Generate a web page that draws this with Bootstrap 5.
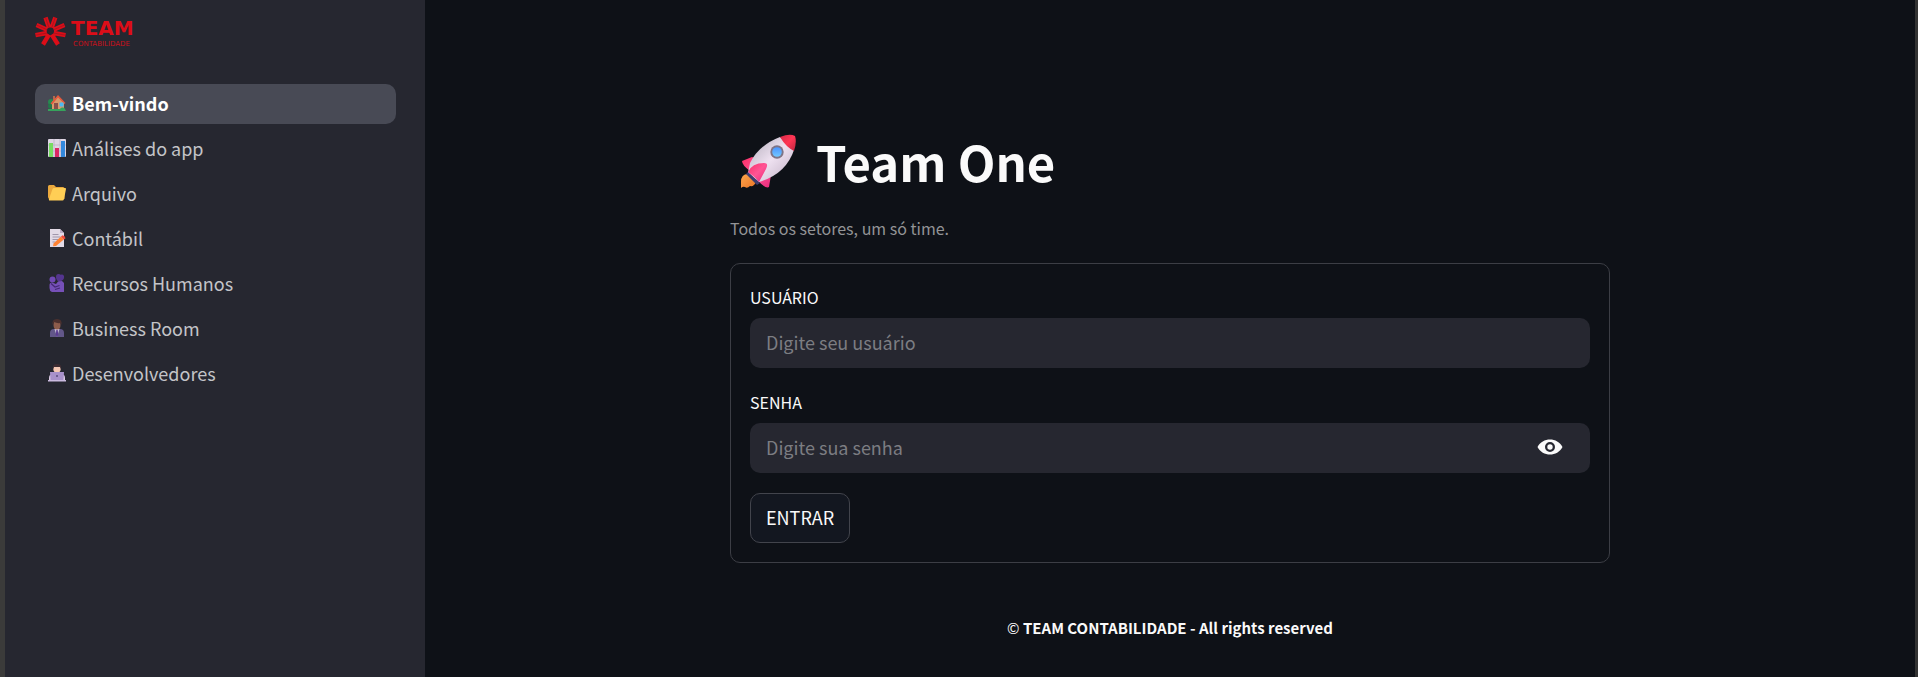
<!DOCTYPE html>
<html lang="pt-BR">
<head>
<meta charset="utf-8">
<meta name="viewport" content="width=device-width, initial-scale=1">
<title>Team One</title>
<link href="https://cdn.jsdelivr.net/npm/bootstrap@5.3.0/dist/css/bootstrap.min.css" rel="stylesheet">
<style>
  body { background: #0e1117; color: #fafafa; font-family: "Noto Sans CJK JP", "Noto Sans", sans-serif; font-size: 18px; border-left: 5px solid #3b3b3a; border-right: 3px solid #333; }
  .side { flex: 0 0 420px; background: #262730; padding: 15px 29px 20px 30px; }
  .brand { margin-bottom: 37px; }
  .side .nav { gap: 5px; }
  .side .nav-link { display: flex; align-items: center; gap: 6px; height: 40px; padding: 0 13px 2px; border-radius: 10px; color: #c3c4c8; }
  .side .nav-link.active { background: #484a55; color: #fff; font-weight: 700; }
  .side .nav-link svg { width: 18px; height: 18px; flex: none; }
  .content { max-width: 880px; padding-top: 129px; }
  h1 { font-size: 49px; line-height: 64px; font-weight: 700; gap: 20px; margin: 0 0 23px; padding-left: 8px; }
  .tagline { font-size: 16px; line-height: 24px; color: #939496; margin: 0 0 23px; }
  .login { border: 1px solid #3c3e45; border-radius: 10px; padding: 19px; }
  .login label { display: block; font-size: 16px; line-height: 28px; margin-bottom: 7px; }
  .field { margin-bottom: 20px; }
  .field .form-control { height: 50px; padding: 0 16px 2px; border: 0; border-radius: 10px; background: #262730; color: #fafafa; font-size: 18px; }
  .field .form-control::placeholder { color: #7c7d82; opacity: 1; }
  .reveal { position: absolute; right: 27px; top: 11px; width: 26px; height: 26px; padding: 0; border: 0; background: none; display: flex; align-items: center; }
  .btn-enter { height: 50px; padding: 0 15px 2px; border: 1px solid #42444c; border-radius: 10px; background: #131720; color: #fafafa; font-size: 18px; }
  .copy { font-size: 15px; line-height: 24px; margin: 53px 0 0; }
</style>
</head>
<body class="d-flex min-vh-100">
<aside class="side">
  <a class="brand d-block" href="#" aria-label="Team Contabilidade">
    <svg class="d-block" width="120" height="32" viewBox="0 0 120 32">
      <g stroke="#dc0d18" stroke-width="4.4">
        <path d="M14 12.800 10.500 2.500M16.700 12.800 20.300 2.500M12 14.700 1.500 10M18.700 14.700 29.500 10M12 18 .5 20.200M18.700 18 30.500 20.200M14 19.500 8 29.500M16.700 19.500 23 29.500"/>
      </g>
      <g stroke="#8a1822" stroke-width=".6">
        <path d="M14 12.800 10.500 2.500M16.700 12.800 20.300 2.500M12 14.700 1.500 10M18.700 14.700 29.500 10M12 18 .5 20.200M18.700 18 30.500 20.200"/>
      </g>
      <circle cx="15.300" cy="16.700" r="2.700" fill="#262730"/>
      <text x="36" y="20" font-family="DejaVu Sans" font-weight="700" font-size="20" fill="#dc0d18">TEAM</text>
      <text x="38" y="31" font-family="DejaVu Sans" font-size="7" fill="#c8101b">CONTABILIDADE</text>
    </svg>
  </a>
  <nav class="nav flex-column">
    <a class="nav-link active" href="#">
      <svg viewBox="0 0 18 18"><circle cx="3" cy="8" r="3" fill="#278a50"/><circle cx="2.500" cy="12" r="2.500" fill="#217a49"/><path d="M5 2h2v4H5z" fill="#b56a4c"/><path d="M4 8l6-6 6 6v8H4z" fill="#d89a6c"/><path d="M2.500 9.500 10 1l7.500 8-1 1L10 3.500 4 10.500z" fill="#e5583c"/><path d="M6 9h4v7H6z" fill="#87504a"/><path d="M11.500 8.500h4v4h-4z" fill="#4cb9f2"/><path d="M0 15h12c1-2 4-2 5 0l1 2H0z" fill="#36a35c"/></svg>
      <span>Bem-vindo</span></a>
    <a class="nav-link" href="#">
      <svg viewBox="0 0 18 18"><rect width="18" height="18" rx="1" fill="#ded6e4"/><path d="M0 6h18M0 12h18M6 0v18M12 0v18" stroke="#b8aec3" stroke-width=".7"/><path d="M1 4h4v14H1z" fill="#76dc61"/><path d="M7 9h4v9H7z" fill="#db2864"/><path d="M13 2h4v16h-4z" fill="#3388dc"/></svg>
      <span>Análises do app</span></a>
    <a class="nav-link" href="#">
      <svg viewBox="0 0 18 18"><path d="M0 2.500Q0 1 1.500 1H6l2 2h7q1.500 0 1.500 1.500V15H2q-2 0-2-2z" fill="#eaa83d"/><path d="M4.500 5Q5 4 6 4h11q1.200 0 1 1l-2 10q-.4 1.500-1.500 1.500H2q-1.500 0-1-1.500z" fill="#ffce55"/></svg>
      <span>Arquivo</span></a>
    <a class="nav-link" href="#">
      <svg viewBox="0 0 18 18"><path d="M2 0h10l4 4v14H2z" fill="#e2dae6"/><path d="M12 0l4 4h-4z" fill="#b9abc4"/><path d="M4.500 5.500h6M4.500 8h8M4.500 10.500h6M4.500 13h3" stroke="#a096aa"/><path d="M5.500 14.500 13 7.500l2.800 3L8 17l-3 .3z" fill="#ff8334"/><path d="M13 7.500l1.500-1.200q2.500.5 3 3L15.800 10.500z" fill="#ee4b3e"/></svg>
      <span>Contábil</span></a>
    <a class="nav-link" href="#">
      <svg viewBox="0 0 18 18"><circle cx="4.500" cy="5.500" r="3" fill="#7049b4"/><path d="M8 3q0-3 2.500-3 1.500 0 2 .8Q15 0 16 2q.5 3-2 4.500L12 8Q8 7 8 3z" fill="#54358e"/><path d="M1.500 11q0-2.500 2.500-2.500L8 10l2-2.500 4-.5 2 2v9H4q-2.500-1-2.500-4z" fill="#7650b8"/><path d="M3 9.500 7 13l4.500-1.500M7 15.500l5-1.500" fill="none" stroke="#432874" stroke-width="1.200"/></svg>
      <span>Recursos Humanos</span></a>
    <a class="nav-link" href="#">
      <svg viewBox="0 0 18 18"><path d="M2 18v-4q0-4 4-4h6q4 0 4 4v4z" fill="#625789"/><path d="M6.500 10h5L9 18z" fill="#c9bdd8"/><path d="M8.300 11h1.400l.6 5L9 18l-1.300-2z" fill="#5b3b91"/><ellipse cx="9" cy="6" rx="3.500" ry="4.500" fill="#8d5c4b"/><path d="M4.500 6Q3.500 0 9 0t4.500 6l-1-2Q9 4.500 6 3z" fill="#4b302e"/></svg>
      <span>Business Room</span></a>
    <a class="nav-link" href="#">
      <svg viewBox="0 0 18 18"><path d="M1 14q0-4 4-4h8q4 0 4 4v3H1z" fill="#dccbe5"/><circle cx="9" cy="5" r="3.700" fill="#f5c8b4"/><path d="M5 5Q4 0 9 0t4 5l-1-2H6z" fill="#3d2c32"/><path d="M2 8h14l-.6 9H2.600z" fill="#a891ca"/><path d="M0 16h18v1.500H0z" fill="#cbbbe0"/><circle cx="9" cy="12" r="1" fill="#5b4c7d"/></svg>
      <span>Desenvolvedores</span></a>
  </nav>
</aside>
<main class="flex-grow-1">
  <div class="content mx-auto">
    <h1 class="d-flex align-items-center">
      <svg width="58" height="58" viewBox="0 0 58 58" aria-hidden="true">
        <defs>
          <linearGradient id="hull" x1="0" y1="0" x2="1" y2="1"><stop offset=".2" stop-color="#c7bfcd"/><stop offset=".5" stop-color="#eee1f0"/><stop offset=".85" stop-color="#cdbdd0"/></linearGradient>
          <linearGradient id="tip" x1="0" y1="0" x2="1" y2="1"><stop offset="0" stop-color="#d62a48"/><stop offset=".5" stop-color="#ff3654"/><stop offset="1" stop-color="#bd263f"/></linearGradient>
          <linearGradient id="fin" x1="0" y1="0" x2="1" y2="1"><stop offset="0" stop-color="#fb2e66"/><stop offset=".5" stop-color="#ff5595"/><stop offset="1" stop-color="#e92b7c"/></linearGradient>
          <linearGradient id="flame" x1="0" y1="0" x2="1" y2="1"><stop offset="0" stop-color="#ffa64b"/><stop offset="1" stop-color="#e87527"/></linearGradient>
          <linearGradient id="glass" x1="0" y1="0" x2="0" y2="1"><stop offset="0" stop-color="#4c94ff"/><stop offset="1" stop-color="#72c8ff"/></linearGradient>
        </defs>
        <path d="M10 42Q3 42 3 50L3 56Q5 54 7 55 9 57 12 54 16 55 18 50L18 46z" fill="url(#flame)"/>
        <path d="M14 25 4 29Q4 33 12 39L19 27zM33 43 31 55Q28 57 20 49L24 44z" fill="url(#fin)"/>
        <path d="M42 5Q21 13 12 31L10 41 21 50Q48 42 56 18z" fill="url(#hull)"/>
        <path d="M42 5Q52 1 57 4 59 10 56 19 48 15 42 5z" fill="url(#tip)"/>
        <path d="M10 40 22 51 19 53 8 42z" fill="#3d3c70"/>
        <path d="M10 40Q14 31 26 31 31 31 28 37L21 50Q18 46 10 40z" fill="url(#fin)"/>
        <circle cx="39" cy="20" r="6.700" fill="#7e7486"/><circle cx="39" cy="20" r="4.800" fill="url(#glass)"/>
      </svg>
      <span>Team One</span>
    </h1>
    <p class="tagline">Todos os setores, um só time.</p>
    <form class="login" onsubmit="return false">
      <div class="field">
        <label for="user">USUÁRIO</label>
        <input id="user" class="form-control" type="text" placeholder="Digite seu usuário">
      </div>
      <div class="field">
        <label for="pass">SENHA</label>
        <div class="position-relative">
          <input id="pass" class="form-control" type="password" placeholder="Digite sua senha">
          <button class="reveal" type="button" aria-label="Mostrar senha">
            <svg width="26" height="16" viewBox="0 0 26 16" fill="#fafafa"><path fill-rule="evenodd" d="M.5 8C3 3 8 .5 13 .5S23 3 25.500 8C23 13 18 15.500 13 15.500S3 13 .5 8ZM13 3a5 5 0 1 0 0 10 5 5 0 0 0 0-10Z"/><circle cx="13" cy="8" r="2.700"/></svg>
          </button>
        </div>
      </div>
      <button class="btn btn-enter" type="submit">ENTRAR</button>
    </form>
    <p class="copy text-center">© <b>TEAM CONTABILIDADE - All rights reserved</b></p>
  </div>
</main>
<script src="https://cdn.jsdelivr.net/npm/bootstrap@5.3.0/dist/js/bootstrap.bundle.min.js"></script>
</body>
</html>
